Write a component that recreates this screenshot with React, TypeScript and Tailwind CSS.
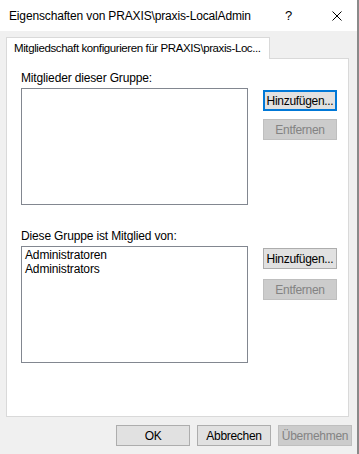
import React from "react"

function Btn({
  children,
  variant = "normal",
  className = "",
}: {
  children: React.ReactNode
  variant?: "normal" | "focus" | "disabled"
  className?: string
}) {
  const styles = {
    normal: "border border-[#adadad] bg-[#e1e1e1] text-black",
    focus: "border-2 border-[#0078d7] bg-[#e1e1e1] text-black",
    disabled: "border border-[#bfbfbf] bg-[#cccccc] text-[#838383]",
  }
  return (
    <div
      className={`flex h-[21px] w-[74px] items-center justify-center whitespace-nowrap text-[12px] leading-none tracking-[-0.3px] ${styles[variant]} ${className}`}
    >
      {children}
    </div>
  )
}

function GroupSection({
  label,
  items,
  focused,
  className = "",
}: {
  label: string
  items: string[]
  focused?: boolean
  className?: string
}) {
  return (
    <div className={`flex flex-col ${className}`}>
      <div className="h-[17px] text-[12px] leading-[15px] text-black">{label}</div>
      <div className="flex">
        <div className="h-[117px] w-[227px] border border-[#828790] bg-white px-[3px] pt-[1px] text-[12px] leading-[14px] text-black">
          {items.map((it) => (
            <div key={it}>{it}</div>
          ))}
        </div>
        <div className="ml-[15px] flex flex-col pt-[2px]">
          <Btn variant={focused ? "focus" : "normal"}>Hinzufügen...</Btn>
          <Btn variant="disabled" className={focused ? "mt-[8px]" : "mt-[10px]"}>
            Entfernen
          </Btn>
        </div>
      </div>
    </div>
  )
}

export default function App() {
  return (
    <div
      className="flex h-[454px] w-[359px] flex-col border-r-2 border-[#8a8a8a] bg-[#f0f0f0] tracking-[-0.15px]"
      style={{ fontFamily: '"Liberation Sans", Arial, sans-serif' }}
    >
      {/* title bar */}
      <div className="flex h-[31px] items-center bg-white pl-[9px] text-[12px] text-black">
        <span className="flex-1 whitespace-nowrap">Eigenschaften von PRAXIS\praxis-LocalAdmin</span>
        <span className="mr-[40px] text-[13px]">?</span>
        <svg width="10" height="10" viewBox="0 0 10 10" className="mr-[15px]">
          <path d="M0.5 0.5 L9.5 9.5 M9.5 0.5 L0.5 9.5" stroke="#000" strokeWidth="1" />
        </svg>
      </div>

      {/* tabs */}
      <div className="flex flex-col pl-[6px] pr-[8px] pt-[6px]">
        <div className="relative z-10 -mb-px flex h-[22px] w-[264px] items-center whitespace-nowrap border border-b-0 border-[#d9d9d9] bg-white pl-[7px] text-[11.5px] tracking-[-0.4px] text-black">
          Mitgliedschaft konfigurieren für PRAXIS\praxis-Loc...
        </div>
        <div className="h-[359px] border border-[#d9d9d9] bg-white pl-[14px] pt-[12px]">
          <GroupSection
            label="Mitglieder dieser Gruppe:"
            items={[]}
            focused
          />
          <GroupSection
            label="Diese Gruppe ist Mitglied von:"
            items={["Administratoren", "Administrators"]}
            className="mt-[24px]"
          />
        </div>
      </div>

      {/* bottom buttons */}
      <div className="flex justify-end gap-[7px] pr-[5px] pt-[8px]">
        <Btn>OK</Btn>
        <Btn>Abbrechen</Btn>
        <Btn variant="disabled">Übernehmen</Btn>
      </div>
    </div>
  )
}
